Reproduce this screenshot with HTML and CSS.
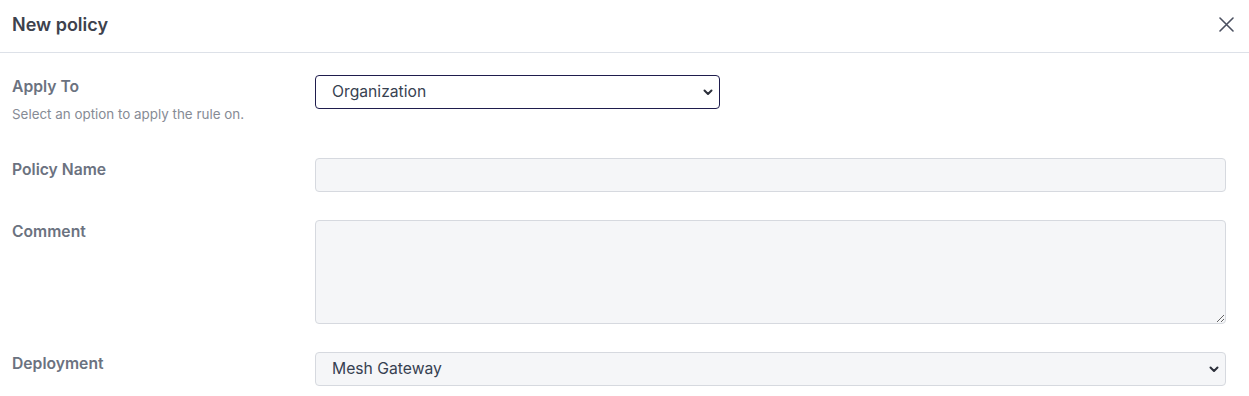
FILE: index.html
```html
<!DOCTYPE html>
<html lang="en">
<head>
    <meta charset="UTF-8">
    <title>New policy</title>
    <link rel="stylesheet" href="styles.css">
</head>
<body>
    <div class="modal">
        <div class="modal-header">
            <h2 class="modal-title">New policy</h2>
            <button class="close-btn" aria-label="Close">
                <svg width="15" height="15" viewBox="0 0 15 15">
                    <path d="M1 1L14 14M14 1L1 14" stroke="#4b5060" stroke-width="1.6" stroke-linecap="round"/>
                </svg>
            </button>
        </div>
        <form class="modal-body">
            <div class="row">
                <div class="label-col">
                    <label for="applyTo" class="label">Apply To</label>
                    <p class="hint">Select an option to apply the rule on.</p>
                </div>
                <div class="field-col">
                    <div class="select-wrap select-short">
                        <select id="applyTo" class="select">
                            <option>Organization</option>
                        </select>
                        <svg class="chevron" width="10" height="7" viewBox="0 0 10 7">
                            <path d="M1.5 1.5L5 5L8.5 1.5" fill="none" stroke="#2b2f3a" stroke-width="2" stroke-linecap="round" stroke-linejoin="round"/>
                        </svg>
                    </div>
                </div>
            </div>
            <div class="row">
                <div class="label-col">
                    <label for="policyName" class="label">Policy Name</label>
                </div>
                <div class="field-col">
                    <input type="text" id="policyName" class="input">
                </div>
            </div>
            <div class="row">
                <div class="label-col">
                    <label for="comment" class="label">Comment</label>
                </div>
                <div class="field-col">
                    <textarea id="comment" class="input textarea"></textarea>
                </div>
            </div>
            <div class="row">
                <div class="label-col">
                    <label for="deployment" class="label">Deployment</label>
                </div>
                <div class="field-col">
                    <div class="select-wrap">
                        <select id="deployment" class="select select-muted">
                            <option>Mesh Gateway</option>
                        </select>
                        <svg class="chevron" width="10" height="7" viewBox="0 0 10 7">
                            <path d="M1.5 1.5L5 5L8.5 1.5" fill="none" stroke="#2b2f3a" stroke-width="2" stroke-linecap="round" stroke-linejoin="round"/>
                        </svg>
                    </div>
                </div>
            </div>
        </form>
    </div>
</body>
</html>
```

FILE: styles.css
```css
body {
    margin: 0;
    font-family: Inter, "Noto Sans", Arial, sans-serif;
    background-color: #ffffff;
    color: #374151;
}
.modal {
    width: 100%;
}
.modal-header {
    display: flex;
    align-items: center;
    justify-content: space-between;
    box-sizing: border-box;
    height: 53px;
    padding: 0 15px 3px 12px;
    border-bottom: 1px solid #dde1e8;
}
.modal-title {
    margin: 0;
    font-size: 18px;
    font-weight: 600;
    color: #3d424d;
}
.close-btn {
    display: flex;
    padding: 0;
    border: none;
    background: none;
    cursor: pointer;
}
.modal-body {
    display: flex;
    flex-direction: column;
    gap: 28px;
    padding: 22px 23px 10px 12px;
}
.row {
    display: flex;
}
.label-col {
    width: 303px;
    flex-shrink: 0;
}
.field-col {
    flex: 1;
}
.label {
    display: block;
    padding-top: 1px;
    font-size: 15.7px;
    line-height: 22px;
    font-weight: 600;
    color: #6b7280;
}
.hint {
    margin: 7px 0 7px;
    font-size: 13.4px;
    line-height: 18px;
    color: #868b95;
}
.select-wrap {
    position: relative;
}
.select-short {
    width: 405px;
}
.chevron {
    position: absolute;
    right: 7px;
    top: 14px;
    pointer-events: none;
}
.select, .input {
    display: block;
    box-sizing: border-box;
    width: 100%;
    height: 34px;
    padding: 0 16px 1px;
    font-family: inherit;
    font-size: 15.7px;
    color: #374151;
    border-radius: 4px;
}
.select {
    appearance: none;
    background-color: #ffffff;
    border: 1px solid #1f1d4d;
}
.select-muted {
    background-color: #f5f6f8;
    border-color: #d6d9df;
}
.input {
    background-color: #f5f6f8;
    border: 1px solid #d6d9df;
}
.textarea {
    height: 104px;
    padding: 8px 16px;
    resize: vertical;
}
```
